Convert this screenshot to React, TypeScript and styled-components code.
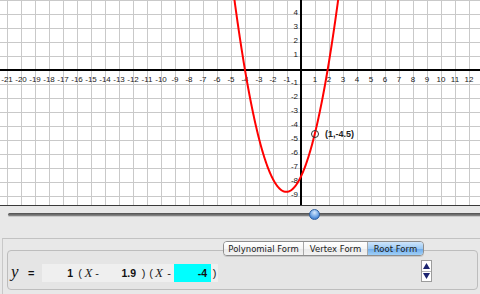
import React from "react";
import styled, { createGlobalStyle } from "styled-components";

const GlobalStyle = createGlobalStyle`
  html, body { margin: 0; padding: 0; background: #e8e8e8; }
  body { font-family: "DejaVu Sans", "Liberation Sans", sans-serif; }
`;

const Page = styled.div`
  width: 480px;
  height: 294px;
  display: flex;
  flex-direction: column;
  overflow: hidden;
  background: #e8e8e8;
`;

const GraphArea = styled.div`
  height: 205px;
  background: #fff;
  border-bottom: 1px solid #3a3a3a;
  flex: none;
`;

const SliderPanel = styled.div`
  height: 32px;
  flex: none;
  display: flex;
  padding: 7px 0 0 8px;
  box-sizing: border-box;
`;

const Track = styled.div`
  position: relative;
  flex: 1;
  height: 3px;
  border-radius: 2px 0 0 2px;
  background: linear-gradient(#4e4e4e, #8c8c8c);
  box-shadow: 0 1px 0 #c9c9c9;
`;

const Thumb = styled.div`
  position: absolute;
  top: -4px;
  width: 11px;
  height: 11px;
  border-radius: 50%;
  box-sizing: border-box;
  border: 1px solid #2f5f9e;
  background: radial-gradient(circle at 50% 30%, #d4e7fb 0%, #7fb0ea 45%, #3f7fd0 80%, #2e64b4 100%);
`;

const LowerPanel = styled.div`
  flex: 1;
  margin-left: 2px;
  border-top: 1px solid #c2c2c2;
  border-left: 1px solid #c8c8c8;
  padding: 2px 2px 0 4px;
  display: flex;
  flex-direction: column;
`;

const TabsRow = styled.div`
  display: flex;
  margin-left: 216px;
  position: relative;
  z-index: 1;
`;

const Segmented = styled.div`
  display: flex;
  height: 13px;
  border: 1px solid #8d8d8d;
  border-radius: 4px;
  overflow: hidden;
  box-shadow: 0 1px 0 rgba(0, 0, 0, 0.12);
`;

const Segment = styled.div<{ $w: number; $active?: boolean }>`
  width: ${(p) => p.$w}px;
  display: flex;
  align-items: center;
  justify-content: center;
  font-family: "DejaVu Sans", sans-serif;
  font-size: 8.5px;
  color: #1a1a1a;
  background: ${(p) =>
    p.$active
      ? "linear-gradient(#cfe5fb 0%, #9ccaf4 50%, #6eaaea 51%, #9fd0f8 100%)"
      : "linear-gradient(#ffffff 0%, #f6f6f6 50%, #e9e9e9 51%, #f3f3f3 100%)"};
  & + & {
    border-left: 1px solid #a8a8a8;
  }
`;

const GroupBox = styled.div`
  margin-top: -6px;
  height: 40px;
  border: 1px solid #bdbdbd;
  border-radius: 4px;
  background: #e5e5e5;
  display: flex;
  align-items: center;
  padding: 6px 0 0 3px;
  box-sizing: border-box;
`;

const YVar = styled.span`
  width: 17px;
  font-family: "Liberation Serif", serif;
  font-style: italic;
  font-size: 17px;
  color: #111;
  margin-top: -2px;
`;

const Equals = styled.span`
  width: 14px;
  font-family: "Liberation Sans", sans-serif;
  font-weight: bold;
  font-size: 11px;
  color: #111;
`;

const EqBar = styled.div`
  display: flex;
  align-items: center;
  height: 18px;
  background: #efefef;
`;

const Field = styled.span<{ $w: number; $hi?: boolean }>`
  width: ${(p) => p.$w}px;
  height: 18px;
  box-sizing: border-box;
  padding-right: ${(p) => (p.$hi ? 4 : 3)}px;
  display: flex;
  align-items: center;
  justify-content: flex-end;
  font-family: "Liberation Sans", sans-serif;
  font-weight: bold;
  font-size: 10.5px;
  color: #111;
  background: ${(p) => (p.$hi ? "#00ffff" : "transparent")};
`;

const Sym = styled.span<{ $w: number }>`
  width: ${(p) => p.$w}px;
  text-align: center;
  font-family: "Liberation Sans", sans-serif;
  font-size: 11px;
  color: #222;
`;

const XVar = styled.span<{ $w: number }>`
  width: ${(p) => p.$w}px;
  text-align: center;
  font-family: "Liberation Serif", serif;
  font-style: italic;
  font-size: 13px;
  color: #222;
`;

const Stepper = styled.div`
  margin-left: auto;
  margin-right: 45px;
  margin-top: -4px;
  width: 11px;
  height: 22px;
  box-sizing: border-box;
  border: 1px solid #9c9c9c;
  background: #fff;
  display: flex;
  flex-direction: column;
`;

const StepBtn = styled.div`
  flex: 1;
  display: flex;
  align-items: center;
  justify-content: center;
  & + & {
    border-top: 1px solid #b5b5b5;
  }
`;

const OX = 301;
const OY = 70;
const S = 14;

function Graph() {
  const vLines = [];
  for (let k = -22; k <= 13; k++) {
    if (k === 0) continue;
    const x = OX + k * S + 0.5;
    vLines.push(<line key={"v" + k} x1={x} y1={0} x2={x} y2={205} stroke="#c9c9c9" strokeWidth={1} />);
  }
  const hLines = [];
  for (let k = -5; k <= 10; k++) {
    if (k === 0) continue;
    const y = OY + k * S + 0.5;
    hLines.push(<line key={"h" + k} x1={0} y1={y} x2={480} y2={y} stroke="#c9c9c9" strokeWidth={1} />);
  }
  const xLabels = [];
  for (let k = -21; k <= 12; k++) {
    if (k === 0) continue;
    xLabels.push(
      <text key={"xl" + k} x={OX + k * S} y={OY + 12} textAnchor="middle">
        {k < 0 ? "-" + Math.abs(k) : String(k)}
      </text>
    );
  }
  const yLabels = [];
  for (let k = 4; k >= -9; k--) {
    if (k === 0) continue;
    yLabels.push(
      <text key={"yl" + k} x={OX - 3} y={OY - k * S + 1} textAnchor="end">
        {k < 0 ? "-" + Math.abs(k) : String(k)}
      </text>
    );
  }
  const pts: string[] = [];
  for (let x = -5.2; x <= 3.2; x += 0.02) {
    const y = (x - 1.9) * (x + 4);
    pts.push(`${(OX + x * S).toFixed(2)},${(OY - y * S).toFixed(2)}`);
  }
  return (
    <svg width={480} height={205} style={{ display: "block" }}>
      {vLines}
      {hLines}
      <line x1={0} y1={OY} x2={480} y2={OY} stroke="#000" strokeWidth={2} />
      <line x1={OX} y1={0} x2={OX} y2={205} stroke="#000" strokeWidth={2} />
      <g fontFamily="Liberation Sans, sans-serif" fontSize={8} fill="#222">
        {xLabels}
        {yLabels}
      </g>
      <polyline points={pts.join(" ")} fill="none" stroke="#ff0000" strokeWidth={2} />
      <circle cx={315} cy={134} r={3.5} fill="none" stroke="#333" strokeWidth={1} />
      <text x={325} y={137} fontFamily="Liberation Sans, sans-serif" fontSize={9} fontWeight="bold" fill="#222">
        (1,-4.5)
      </text>
    </svg>
  );
}

export default function App() {
  return (
    <>
      <GlobalStyle />
      <Page>
        <GraphArea>
          <Graph />
        </GraphArea>
        <SliderPanel>
          <Track>
            <Thumb style={{ left: 301 }} />
          </Track>
        </SliderPanel>
        <LowerPanel>
          <TabsRow>
            <Segmented>
              <Segment $w={79}>Polynomial Form</Segment>
              <Segment $w={63}>Vertex Form</Segment>
              <Segment $w={55} $active>
                Root Form
              </Segment>
            </Segmented>
          </TabsRow>
          <GroupBox>
            <YVar>y</YVar>
            <Equals>=</Equals>
            <EqBar>
              <Field $w={34}>1</Field>
              <Sym $w={8}>(</Sym>
              <XVar $w={9}>X</XVar>
              <Sym $w={8}>-</Sym>
              <Field $w={38}>1.9</Field>
              <Sym $w={9}>)</Sym>
              <Sym $w={6}>(</Sym>
              <XVar $w={10}>X</XVar>
              <Sym $w={10}>-</Sym>
              <Field $w={37} $hi>
                -4
              </Field>
              <Sym $w={7}>)</Sym>
            </EqBar>
            <Stepper>
              <StepBtn>
                <svg width="7" height="6" viewBox="0 0 7 6">
                  <path d="M3.5 0 L7 6 L0 6 Z" fill="#1c2470" />
                </svg>
              </StepBtn>
              <StepBtn>
                <svg width="7" height="6" viewBox="0 0 7 6">
                  <path d="M0 0 L7 0 L3.5 6 Z" fill="#1c2470" />
                </svg>
              </StepBtn>
            </Stepper>
          </GroupBox>
        </LowerPanel>
      </Page>
    </>
  );
}
